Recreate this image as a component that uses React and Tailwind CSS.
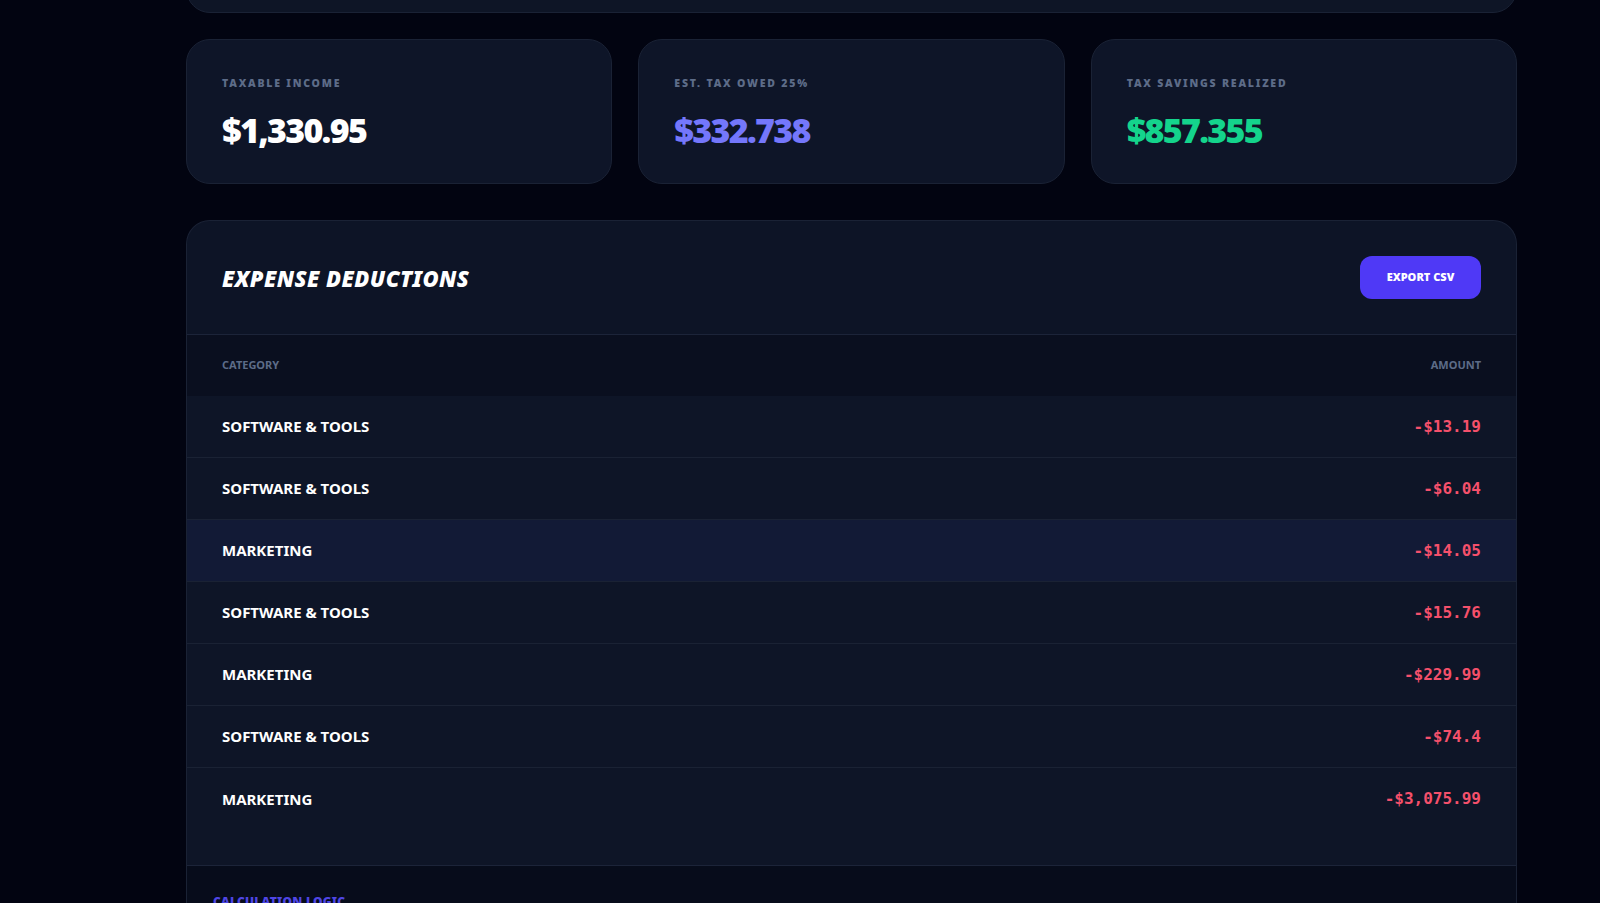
import React from "react";

const stats = [
  { label: "Taxable Income", value: "$1,330.95", color: "text-white" },
  { label: "Est. Tax Owed 25%", value: "$332.738", color: "text-[#7477fb]" },
  { label: "Tax Savings Realized", value: "$857.355", color: "text-[#14d48c]" },
];

const rows = [
  { category: "Software & Tools", amount: "-$13.19" },
  { category: "Software & Tools", amount: "-$6.04" },
  { category: "Marketing", amount: "-$14.05", active: true },
  { category: "Software & Tools", amount: "-$15.76" },
  { category: "Marketing", amount: "-$229.99" },
  { category: "Software & Tools", amount: "-$74.4" },
  { category: "Marketing", amount: "-$3,075.99" },
];

export default function App() {
  return (
    <div
      className="h-[903px] overflow-hidden bg-[#020411] pl-[186px] pr-[83px]"
      style={{ fontFamily: '"Noto Sans", "Open Sans", sans-serif' }}
    >
      {/* bottom of the previous section, scrolled off */}
      <div className="h-[100px] -mt-[87px] rounded-b-3xl border border-[#1a2235] bg-[#0e1526]" />

      {/* summary cards */}
      <div className="mt-[26px] grid grid-cols-3 gap-[26px]">
        {stats.map((s) => (
          <div
            key={s.label}
            className="h-[145px] rounded-3xl border border-[#1a2235] bg-[#0e1528] px-[35px] pt-[38px]"
          >
            <div className="text-[10.5px] font-black uppercase leading-none tracking-[0.17em] text-[#5d6c88]">
              {s.label}
            </div>
            <div className={`mt-[24px] text-[34px] font-black leading-none tracking-[-0.05em] ${s.color}`}>
              {s.value}
            </div>
          </div>
        ))}
      </div>

      {/* expense table */}
      <div className="mt-[36px] rounded-t-3xl border border-b-0 border-[#1a2235] bg-[#0d1426]">
        <div className="flex h-[114px] items-center justify-between border-b border-[#1c2439] px-[35px]">
          <h2 className="pt-[2px] text-[22px] font-black italic uppercase tracking-[0.02em] text-white">
            Expense Deductions
          </h2>
          <button className="h-[43px] w-[121px] rounded-xl bg-[#4f39f6] text-[11px] font-black uppercase text-white">
            Export CSV
          </button>
        </div>

        <div className="flex h-[61px] items-center justify-between bg-[#0a0f1f] px-[35px] text-[11px] font-bold uppercase text-[#5d6c88]">
          <span>Category</span>
          <span>Amount</span>
        </div>

        {rows.map((r, i) => (
          <div
            key={i}
            className={`flex h-[62px] items-center justify-between px-[35px] ${
              i < rows.length - 1 ? "border-b border-[#1a2234]" : ""
            } ${r.active ? "bg-[#121a36]" : "bg-[#0e1527]"}`}
          >
            <span className="text-[15px] font-bold uppercase text-white">
              {r.category}
            </span>
            <span
              className="text-[16px] font-bold text-[#f5506b]"
              style={{ fontFamily: '"DejaVu Sans Mono", "Liberation Mono", monospace' }}
            >
              {r.amount}
            </span>
          </div>
        ))}

        <div className="h-[35px] bg-[#0e1527]" />

        <div className="h-[60px] border-t border-[#1c2439] bg-[#070c1b] pl-[26px] pt-[27px]">
          <div className="text-[12px] font-black uppercase tracking-[0.02em] text-[#4f46e5]">
            Calculation Logic
          </div>
        </div>
      </div>
    </div>
  );
}
